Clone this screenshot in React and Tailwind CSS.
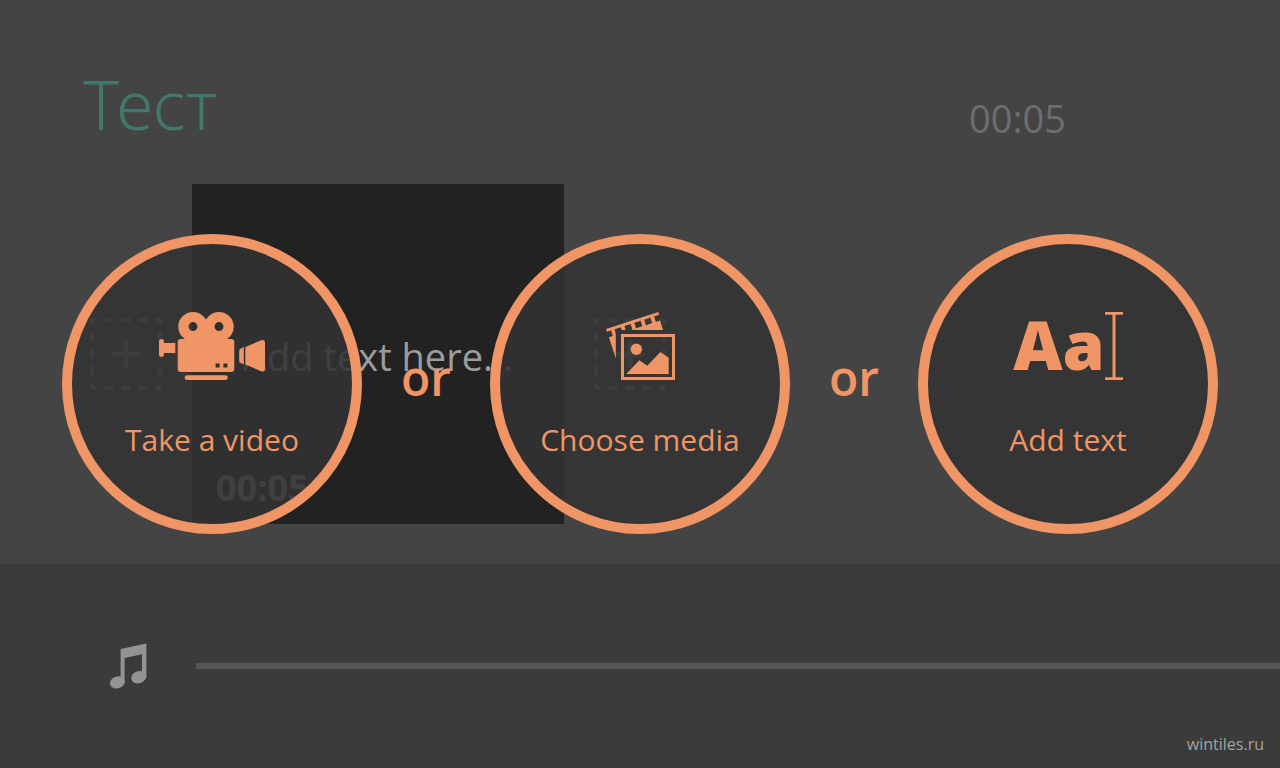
import React from "react";

const CameraIcon = () => (
  <svg width="107" height="68" viewBox="0 0 107 68" fill="currentColor" aria-hidden="true">
    <path
      fillRule="evenodd"
      d="M34 0a14.7 14.7 0 1 1 0 29.4a14.7 14.7 0 1 1 0-29.4zM34 10.1a4.5 4.5 0 1 0 0 9a4.5 4.5 0 1 0 0-9z"
    />
    <path
      fillRule="evenodd"
      d="M60 0a14.7 14.7 0 1 1 0 29.4a14.7 14.7 0 1 1 0-29.4zM60 10.1a4.5 4.5 0 1 0 0 9a4.5 4.5 0 1 0 0-9z"
    />
    <path d="M42 12h10v18H42z" />
    <path
      fillRule="evenodd"
      d="M22 27h50a3.3 3.3 0 0 1 3.3 3.3v26.4a3.3 3.3 0 0 1-3.3 3.3H22a3.3 3.3 0 0 1-3.3-3.3V30.3A3.3 3.3 0 0 1 22 27zM56.6 51.4v4h4v-4zM64.4 51.4v4h4v-4z"
    />
    <rect x="25.6" y="63.3" width="43.2" height="4.7" rx="2.3" />
    <rect x="0" y="27" width="5" height="18" rx="2.4" />
    <path d="M4 31h12.3v10H4z" />
    <path d="M84.8 34.8v17.6l-3.6-1.7q-1-.5-1-1.5V38.4q0-1 1-1.5z" />
    <path d="M86.3 35l16.4-7q3.3-.6 3.3 3v25.4q0 3.6-3.3 3L86.3 52.6z" />
  </svg>
);

const MediaIcon = () => (
  <svg width="69" height="68" viewBox="0 0 69 68" fill="currentColor" aria-hidden="true">
    <clipPath id="film-visible">
      <path d="M0 0h69v18H9.8v30H0z" />
    </clipPath>
    {/* Film strip behind the photo */}
    <g clipPath="url(#film-visible)">
      <g transform="translate(0 17) rotate(-18)">
        <path d="M0 0h55v3H0z" />
        <path d="M4.3 2.5H8v6.2h6.6V2.5h3.8v6.2H25V2.5h3.8v6.2h6.6V2.5h3.8v6.2h6.6V2.5h3.8v6.2H54V45H.2V8.7h4.1z" />
      </g>
    </g>
    <rect x="16.5" y="23.5" width="51" height="43" fill="none" stroke="currentColor" strokeWidth="3" />
    <circle cx="30.3" cy="37.3" r="5.7" />
    <path d="M20.3 62l13-13.7 8 5.4 13-13.7 8.4 5.7V62z" />
  </svg>
);

const TextIcon = () => (
  <span className="flex h-[68px] items-start" aria-hidden="true">
    <span className="text-[68px] leading-16 font-extrabold">Aa</span>
    <svg width="18" height="68" viewBox="0 0 18 68" fill="currentColor">
      <path d="M0 0h18v2.8h-7.5v62.4H18V68H0v-2.8h7.5V2.8H0z" />
    </svg>
  </span>
);

const MusicIcon = () => (
  <svg width="38" height="46" viewBox="0 0 38 46" fill="#939393" aria-hidden="true">
    <path d="M10.6 6L36.4.6v33.6H32V11.2L14.6 15v25h-4z" />
    <ellipse cx="28.8" cy="34.2" rx="7.7" ry="6" transform="rotate(-18 28.8 34.2)" />
    <ellipse cx="7.4" cy="39.4" rx="7.5" ry="6" transform="rotate(-18 7.4 39.4)" />
  </svg>
);

const AddSlot = ({ label }) => (
  <button type="button" aria-label={label} className="shrink-0 text-[#808080]">
    <svg width="72" height="72" viewBox="0 0 72 72" fill="none" stroke="currentColor" strokeWidth="4">
      <path
        d="M2 2h68v68H2z"
        strokeDasharray="9 8"
        strokeDashoffset="4.5"
      />
      <path d="M36 24v24M24 36h24" strokeWidth="5" strokeLinecap="round" />
    </svg>
  </button>
);

const actions = [
  { label: "Take a video", Icon: CameraIcon },
  { label: "Choose media", Icon: MediaIcon },
  { label: "Add text", Icon: TextIcon },
];

const ActionButton = ({ label, Icon }) => (
  <button
    type="button"
    className="flex size-[300px] shrink-0 flex-col items-center justify-start gap-10 rounded-full border-10 border-[#f09566] bg-[#323232]/87 pt-[68px]"
  >
    <Icon />
    <span className="text-3xl leading-10 whitespace-nowrap">{label}</span>
  </button>
);

const App = () => {
  return (
    <div className="relative flex min-h-screen flex-col overflow-hidden bg-[#444444] font-['Open_Sans','Noto_Sans',sans-serif]">
      <main className="flex-1 pb-10">
        <header className="flex h-[184px] items-start justify-between pt-14 pr-[214px] pl-[83px]">
          <h1 className="font-['Noto_Sans','Open_Sans',sans-serif] text-[68px] leading-24 font-light text-[#40786d]">
            Тест
          </h1>
          <span className="pt-9 text-[38px] leading-13 text-[#6d6d6d]">00:05</span>
        </header>

        {/* Clips */}
        <div className="flex items-center gap-[30px] pl-[90px]">
          <AddSlot label="Add clip before" />
          <article className="relative flex h-[340px] w-[372px] shrink-0 items-center justify-center bg-[#222222] text-[#9c9c9c]">
            <p className="pt-1 text-[38px] leading-12 whitespace-nowrap">Add text here...</p>
            <span className="absolute bottom-3 left-6 text-4xl leading-12 font-bold">00:05</span>
          </article>
          <AddSlot label="Add clip after" />
        </div>
      </main>

      {/* Music track */}
      <footer className="flex h-[204px] items-center gap-12 bg-[#3b3b3b] pl-[110px]">
        <MusicIcon />
        <div className="h-1.5 flex-1 bg-[#555555]" />
      </footer>

      {/* Add content menu */}
      <div className="absolute inset-0 flex items-center justify-center text-[#f09566]">
        {actions.map((action, index) => (
          <React.Fragment key={action.label}>
            {index > 0 && (
              <span className="w-32 shrink-0 pb-3 text-center text-5xl leading-16 font-semibold">
                or
              </span>
            )}
            <ActionButton {...action} />
          </React.Fragment>
        ))}
      </div>

      <a href="#" className="absolute right-4 bottom-3 text-base leading-6 text-[#a3a3a3]">
        wintiles.ru
      </a>
    </div>
  );
};

export default App;
